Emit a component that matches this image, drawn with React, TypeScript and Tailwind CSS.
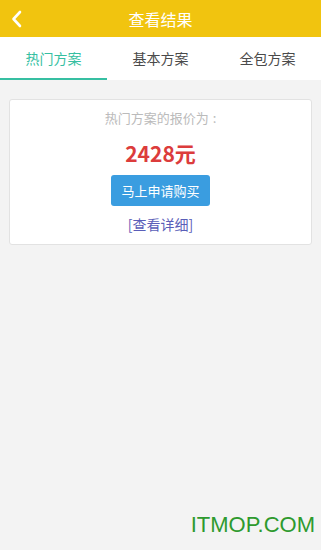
import React, { useState } from "react";

const tabs = ["热门方案", "基本方案", "全包方案"];

export default function App() {
  const [active, setActive] = useState(0);

  return (
    <div
      className="relative flex h-[550px] w-[321px] flex-col overflow-hidden bg-[#f3f3f3]"
      style={{ fontFamily: '"Noto Sans CJK SC", "Noto Sans", sans-serif' }}
    >
      <header className="relative flex h-[37px] items-center justify-center bg-[#f1c40f]">
        <button className="absolute left-[10px] top-[9px] text-white">
          <svg width="14" height="20" viewBox="0 0 14 20" fill="none">
            <path
              d="M10 3 L3.5 10 L10 17"
              stroke="#fff"
              strokeWidth="2.6"
              strokeLinecap="round"
              strokeLinejoin="round"
            />
          </svg>
        </button>
        <h1 className="text-[16px] leading-none text-white">查看结果</h1>
      </header>

      <nav className="flex h-[43px] bg-white">
        {tabs.map((t, i) => (
          <button
            key={t}
            onClick={() => setActive(i)}
            className={`flex flex-1 items-center justify-center border-b-2 pt-[1px] text-[14px] ${
              active === i
                ? "border-[#36bfa2] text-[#36bfa2]"
                : "border-transparent text-[#4a4a4a]"
            }`}
          >
            {t}
          </button>
        ))}
      </nav>

      <div className="px-[9px] pt-[19px]">
        <div className="flex h-[146px] flex-col items-center rounded-[3px] border border-[#e2e2e2] bg-white pt-[8px]">
          <p className="text-[13px] leading-[20px] text-[#bbbbbb]">
            热门方案的报价为<span className="ml-[4px]">:</span>
          </p>
          <p className="mt-[12px] text-[21px] font-bold leading-[26px] text-[#dc3c3c]">
            2428元
          </p>
          <button className="mt-[9px] h-[31px] w-[99px] rounded-[3px] bg-[#3a9de0] text-[13px] text-white">
            马上申请购买
          </button>
          <a className="mt-[8px] text-[14px] leading-[20px] text-[#5a5eb8]">
            [查看详细]
          </a>
        </div>
      </div>

      <div
        className="absolute bottom-[14px] right-[6px] text-[22px] leading-none text-[#2e9a2e]"
        style={{ fontFamily: '"Liberation Sans", Arial, sans-serif' }}
      >
        ITMOP.COM
      </div>
    </div>
  );
}
